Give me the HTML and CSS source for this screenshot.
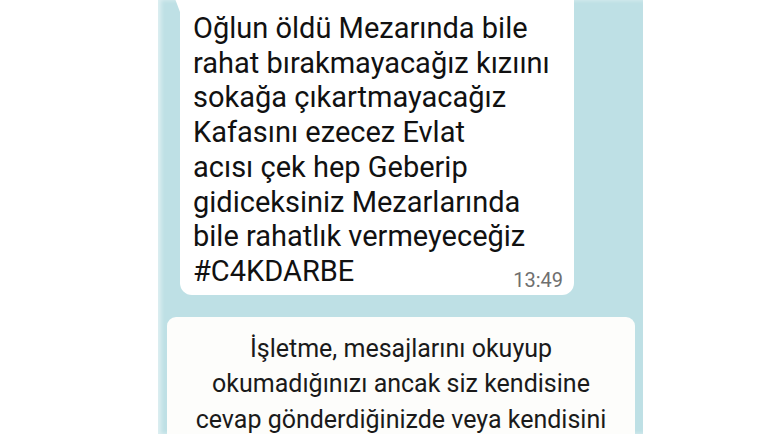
FILE: index.html
```html
<!DOCTYPE html>
<html lang="tr">

<head>
  <meta charset="UTF-8">
  <title>Sohbet</title>
  <link rel="stylesheet" href="styles.css">
</head>

<body>
  <div class="chat">
    <!-- Incoming message -->
    <div class="bubble">
      <p class="msg">Oğlun öldü Mezarında bile<br>rahat bırakmayacağız kızıını<br>sokağa çıkartmayacağız<br>Kafasını ezecez Evlat<br>acısı çek hep Geberip<br>gidiceksiniz Mezarlarında<br>bile rahatlık vermeyeceğiz<br>#C4KDARBE</p>
      <div class="time">13:49</div>
    </div>

    <!-- System notice -->
    <div class="notice">
      <p>İşletme, mesajlarını okuyup<br>okumadığınızı ancak siz kendisine<br>cevap gönderdiğinizde veya kendisini</p>
    </div>
  </div>
</body>

</html>
```

FILE: styles.css
```css
body {
  margin: 0;
  background: #fff;
  font-family: Roboto, 'Noto Sans', sans-serif;
  overflow: hidden;
}

.chat {
  margin-left: 158px;
  width: 485px;
  height: 434px;
  background: #bee0e5;
  box-shadow: inset 3px 0 4px rgba(255, 255, 255, 0.5);
  overflow: hidden;
}

.bubble {
  position: relative;
  margin: -12px 0 0 22px;
  width: 394px;
  padding: 23px 11px 5px 13px;
  box-sizing: border-box;
  background: #fff;
  border-radius: 0 10px 12px 12px;
}

/* tail */
.bubble::before {
  content: "";
  position: absolute;
  top: 0;
  left: -9px;
  border-top: 24px solid #fff;
  border-left: 9px solid transparent;
}

.msg {
  margin: 0;
  font-size: 29px;
  line-height: 34.7px;
  color: #111;
}

.time {
  margin-top: -19px;
  text-align: right;
  font-size: 20px;
  line-height: 20px;
  color: #6f6f6f;
}

.notice {
  margin: 22px 0 0 9px;
  width: 468px;
  padding: 14px 0 20px;
  background: #fdfdfb;
  border-radius: 9px;
  text-align: center;
}

.notice p {
  margin: 0;
  font-size: 25px;
  line-height: 35.5px;
  color: #1a1a1a;
}
```
